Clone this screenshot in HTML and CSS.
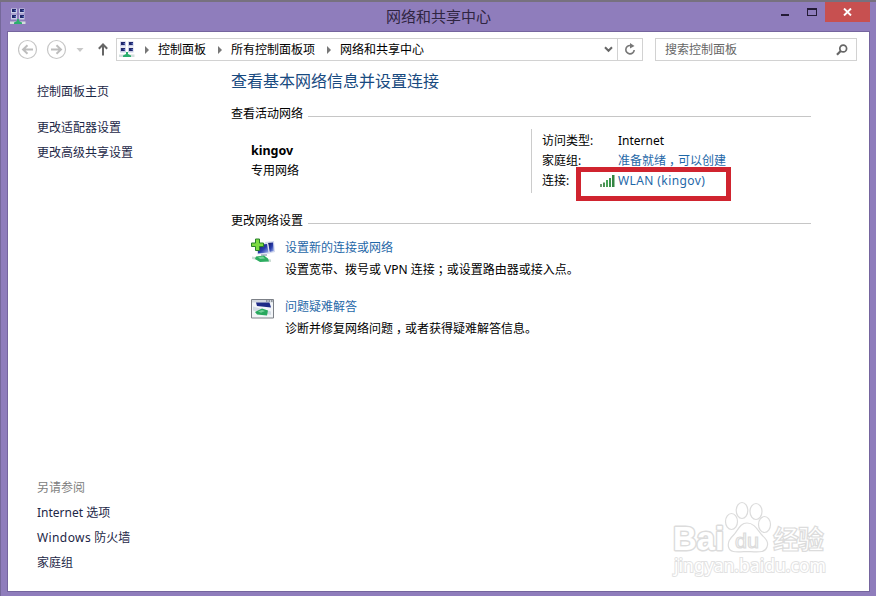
FILE: index.html
```
<!DOCTYPE html>
<html lang="zh-CN">
<head>
	<meta charset="utf-8">
	<title>网络和共享中心</title>
	<link rel="stylesheet" href="styles.css">
</head>
<body>
<svg width="0" height="0" class="defs">
  <defs>
    <linearGradient id="screen" x1="0" y1="0" x2="1" y2="1">
      <stop offset="0" stop-color="#10155c"/>
      <stop offset=".55" stop-color="#2b3fae"/>
      <stop offset="1" stop-color="#a9bdf0"/>
    </linearGradient>
    <symbol id="net" viewBox="0 0 16 17">
      <path d="M1 .5h6v5H1zM9 .5h5.500v5H9zM1 6.500h6v5H1zM9 6.500h5.500v5H9z" fill="#c9cde6"/>
      <path d="M2 1h4v3H2zM10 1h4v3h-4zM2 7h4v3H2zM10 7h4v3h-4z" fill="#20286c"/>
      <path d="M4 2h2v2zM12 2h2v2zM4 8h2v2zM12 8h2v2z" fill="#5f75c4"/>
      <path d="M0 13.500h15.500v2.500H0z" fill="#d3dedd"/>
      <path d="M7 11h2v2l3 1.500V16H4v-1.500l3-1.500z" fill="#2cae6e"/>
    </symbol>
  </defs>
</svg>
<div class="window">
  <div class="titlebar">
    <svg class="app-icon" width="16" height="17"><use href="#net"/></svg>
    <h1>网络和共享中心</h1>
    <div class="buttons">
      <span class="min"></span>
      <span class="max"></span>
      <span class="close"><svg width="9" height="8" viewBox="0 0 9 8"><path d="M1 .5l7 7M8 .5l-7 7" stroke="#fff" stroke-width="1.900"/></svg></span>
    </div>
  </div>

  <div class="client">
    <div class="toolbar">
      <svg class="nav" width="98" height="22" viewBox="0 0 98 22" fill="none">
        <g stroke="#c6c6c6" stroke-width="1.200">
          <circle cx="9.500" cy="11.500" r="9"/>
          <circle cx="38.500" cy="11.500" r="9"/>
        </g>
        <g stroke="#bdbdbd" stroke-width="1.900">
          <path d="M15 11.500H5.500M9.500 7.200L5 11.500l4.500 4.300"/>
          <path d="M33 11.500h9.500M38.500 7.200l4.500 4.300-4.500 4.300"/>
        </g>
        <path d="M58.500 10h7l-3.500 4z" fill="#c8c8c8"/>
        <path d="M85 17.500V7M80.800 10.800L85 6.500l4.200 4.300" stroke="#666" stroke-width="2"/>
      </svg>
      <div class="address">
        <svg width="16" height="17"><use href="#net"/></svg>
        <i class="arrow"></i><span>控制面板</span>
        <i class="arrow"></i><span>所有控制面板项</span>
        <i class="arrow"></i><span>网络和共享中心</span>
        <svg class="drop" width="9" height="7" viewBox="0 0 9 7"><path d="M1 1.200l3.500 3.600L8 1.200" fill="none" stroke="#666" stroke-width="2"/></svg>
        <span class="refresh">
          <svg width="12" height="13" viewBox="0 0 12 13"><path d="M6.500 2.500A4.200 4.200 0 1 0 10.200 7" fill="none" stroke="#777" stroke-width="1.600"/><path d="M6 0l4.500 3L6 5.500z" fill="#777"/></svg>
        </span>
      </div>
      <div class="search">
        <span>搜索控制面板</span>
        <svg width="12" height="12" viewBox="0 0 12 12" fill="none" stroke="#666"><circle cx="7.200" cy="4.500" r="3.400" stroke-width="1.700"/><path d="M4.700 7L1 10.800" stroke-width="2.200"/></svg>
      </div>
    </div>

    <div class="content">
      <div class="sidebar">
        <a class="home">控制面板主页</a>
        <a>更改适配器设置</a>
        <a>更改高级共享设置</a>
        <div class="see-also">
          <p>另请参阅</p>
          <a>Internet 选项</a>
          <a><span class="latin">Windows</span> 防火墙</a>
          <a>家庭组</a>
        </div>
      </div>

      <div class="main">
        <h2>查看基本网络信息并设置连接</h2>
        <div class="section">查看活动网络</div>
        <div class="network">
          <div class="name">
            <b>kingov</b>
            <span>专用网络</span>
          </div>
          <div class="info">
            <span>访问类型:</span><span>Internet</span>
            <span>家庭组:</span><a>准备就绪<span class="mark">，</span>可以创建</a>
            <span>连接:</span>
            <a class="wlan">
              <svg width="15" height="13" viewBox="0 0 15 13"><path d="M0 9h2v3H0z" fill="#6b9c70"/><path d="M3 7.500h2V12H3z" fill="#4c8f55"/><path d="M6 5h2v7H6z" fill="#48a456"/><path d="M9 3h2v9H9z" fill="#3b934b"/><path d="M12 0h2.500v12H12z" fill="#358543"/></svg><span class="latin">WLAN (kingov)</span>
            </a>
            <div class="highlight"></div>
          </div>
        </div>

        <div class="section">更改网络设置</div>
        <div class="task">
          <svg width="26" height="26" viewBox="0 0 26 26">
            <path d="M14 4l9-1 1 11-8 2z" fill="#d4daee"/>
            <path d="M17 5l5-.5.800 8.500-4.500 1z" fill="url(#screen)"/>
            <path d="M5 6l12-1.500 2 11-13 1z" fill="#dfe4f2"/>
            <path d="M6.500 7l9.500-1 1.500 8.500-10.500 1z" fill="url(#screen)"/>
            <path d="M10 16h6v2h-6z" fill="#b9c0cf"/>
            <path d="M1 18.500l19 3v2.500l-19-3z" fill="#cbdcd4"/>
            <path d="M5 18.500l8-1 4 3 1 3-9 .500-5-3z" fill="#2dad60"/>
            <path d="M7 19l5-.5 2 2-5 .5z" fill="#77d698"/>
            <path d="M4.500 1h4v4h4v3.500h-4v4h-4v-4h-4V5h4z" fill="#7ddb42" stroke="#29822b"/>
          </svg>
          <div>
            <a>设置新的连接或网络</a>
            <p>设置宽带、拨号或 VPN 连接<span class="mark">；</span>或设置路由器或接入点。</p>
          </div>
        </div>
        <div class="task">
          <svg width="26" height="26" viewBox="0 0 26 26">
            <path d="M.5 2.500h22v18.500H.5z" fill="#f2f5f8" stroke="#7c8087"/>
            <path d="M1 3h21v2.500H1z" fill="#d3d8df"/>
            <path d="M15 4h1.500M17.500 4H19M20 4h1.500" stroke="#4d5563"/>
            <path d="M5 5.500h13.500l1.500 5L6 9z" fill="#1d2a86"/>
            <path d="M2 9.500l18 5v3.500L2 13.500z" fill="#d3dbe4"/>
            <path d="M4 15l7-3.500 6 2-1 5-10-1z" fill="#28a85e"/>
            <path d="M7 14.500l4-1.500 3 1-4 1.800z" fill="#75d19b"/>
          </svg>
          <div>
            <a>问题疑难解答</a>
            <p>诊断并修复网络问题<span class="mark">，</span>或者获得疑难解答信息。</p>
          </div>
        </div>
      </div>
    </div>

    <svg class="watermark" width="164" height="86" viewBox="0 0 164 86">
      <text x="3" y="50" font-size="34" class="bai" textLength="51" lengthAdjust="spacingAndGlyphs">Bai</text>
      <ellipse cx="61.500" cy="21.500" rx="6" ry="8"/>
      <ellipse cx="72" cy="10.500" rx="5.800" ry="8"/>
      <ellipse cx="86" cy="11.500" rx="6" ry="8"/>
      <ellipse cx="94.500" cy="24.500" rx="6" ry="8"/>
      <path d="M77 23c7 0 10 6 14 11 5 5 8 8 6 13-2 6-8 5-20 4.500C66 52 60 53 58.500 47c-1-5 1-8 6-13 4-5 6-11 12.500-11z"/>
      <text x="65" y="48" font-size="21" class="thin" textLength="24" lengthAdjust="spacingAndGlyphs">du</text>
      <text x="103" y="49" font-size="26" textLength="51">经验</text>
      <text x="4" y="72" font-size="18" class="url" textLength="152" lengthAdjust="spacingAndGlyphs">jingyan.baidu.com</text>
    </svg>
  </div>
</div>
</body>
</html>
```

FILE: styles.css
```
body {
  margin: 0;
  font-family: "Noto Sans", "Noto Sans CJK SC", sans-serif;
  font-size: 12px;
  line-height: 20px;
  color: #000;
}

h1, h2, p {
  margin: 0;
  font-weight: normal;
}

svg {
  flex: none;
}

.defs {
  position: absolute;
}

.latin {
  letter-spacing: .4px;
}

/* full-width punctuation sits in the middle of its cell */
.mark {
  display: inline-block;
  width: 12px;
  text-align: center;
  font-feature-settings: "halt";
}

.window {
  box-sizing: border-box;
  width: 876px;
  height: 596px;
  padding: 0 6px 4px 7px;
  background: #8f7dbc;
  border-top: 2px solid #77717f;
  display: flex;
  flex-direction: column;
  overflow: hidden;
  box-shadow: inset 1px 0 #75689a;
}

.titlebar {
  height: 29px;
  display: grid;
  grid-template-columns: 100px 1fr 100px;
}

.app-icon {
  margin: 6px 0 0 3px;
}

.titlebar h1 {
  font-size: 15px;
  line-height: 29px;
  text-align: center;
  color: #2f2541;
}

.buttons {
  display: flex;
  justify-content: flex-end;
  align-items: flex-start;
}

.min {
  width: 8px;
  height: 2px;
  margin: 12px 18px 0 0;
  background: #241b36;
}

.max {
  box-sizing: border-box;
  width: 10px;
  height: 8px;
  margin: 6px 8px 0 0;
  border: 1px solid #241b36;
  border-top-width: 2px;
}

.close {
  width: 45px;
  height: 20px;
  display: flex;
  align-items: center;
  justify-content: center;
  background: #c75050;
}

.client {
  position: relative;
  flex: 1;
  display: flex;
  flex-direction: column;
  background: #fff;
  border: 1px solid #75659e;
}

.toolbar {
  height: 23px;
  padding: 6px 12px 0 10px;
  display: flex;
}

.address,
.search {
  box-sizing: border-box;
  height: 23px;
  border: 1px solid #d2d2d2;
  display: flex;
  align-items: center;
}

.address {
  width: 527px;
  padding-left: 2px;
}

.arrow {
  margin: 0 9px 0 12px;
  border: 4px solid transparent;
  border-left-color: #777;
  border-right: 0;
}

.address svg + .arrow {
  margin-left: 10px;
}

.drop {
  margin-left: auto;
  margin-right: 4px;
}

.refresh {
  align-self: stretch;
  width: 24px;
  display: flex;
  align-items: center;
  justify-content: center;
  border-left: 1px solid #d2d2d2;
}

.search {
  width: 202px;
  margin-left: auto;
  padding: 0 8px 0 9px;
  justify-content: space-between;
  color: #666;
}

.content {
  flex: 1;
  display: flex;
}

.sidebar {
  width: 194px;
  padding: 21px 0 16px 29px;
  display: flex;
  flex-direction: column;
  color: #1c2747;
}

.sidebar a {
  line-height: 25px;
}

.sidebar .home {
  line-height: 20px;
  margin-bottom: 13px;
}

.see-also {
  margin-top: auto;
  display: flex;
  flex-direction: column;
}

.see-also p {
  line-height: 25px;
  color: #808080;
}

.main {
  width: 580px;
}

.main a {
  color: #1f68a8;
}

.main h2 {
  font-size: 16px;
  line-height: 24px;
  padding-top: 8px;
  color: #184a80;
}

.section {
  display: flex;
  align-items: center;
  height: 20px;
  margin-top: 11px;
}

.section::after {
  content: "";
  flex: 1;
  height: 1px;
  margin: 5px 0 0 5px;
  background: #c6c6c6;
}

.network {
  display: flex;
  margin-top: 5px;
  height: 64px;
}

.name {
  width: 280px;
  padding: 12px 0 0 20px;
  display: flex;
  flex-direction: column;
}

.name b {
  font-size: 12.5px;
}

.info {
  position: relative;
  display: grid;
  grid-template-columns: 76px auto;
  grid-auto-rows: 20px;
  padding: 2px 0 0 10px;
  border-left: 1px solid #ccc;
}

.wlan {
  display: flex;
  align-items: center;
  gap: 3px;
  margin-left: -18px;
}

.highlight {
  position: absolute;
  left: 44px;
  top: 38px;
  width: 145px;
  height: 24px;
  border: 5px solid #d0242f;
}

.network + .section {
  margin-top: 18px;
}

.task {
  display: flex;
  gap: 8px;
  margin-left: 20px;
  height: 59px;
}

.section + .task {
  margin-top: 7px;
}

.task p {
  margin-top: 2px;
}

.watermark {
  position: absolute;
  left: 662px;
  top: 468px;
  fill: #fff;
  stroke: #dcdcdc;
  stroke-width: 1.2px;
  font-family: "Liberation Sans", "Noto Sans CJK SC", sans-serif;
  font-weight: bold;
}

.watermark .bai {
  stroke-width: 3px;
  stroke-linejoin: round;
  paint-order: stroke;
}

.watermark .thin {
  font-weight: normal;
}

.watermark .url {
  font-family: "Noto Sans", sans-serif;
  font-weight: normal;
  stroke: #e2e2e2;
  stroke-width: 2px;
  paint-order: stroke;
}
```
